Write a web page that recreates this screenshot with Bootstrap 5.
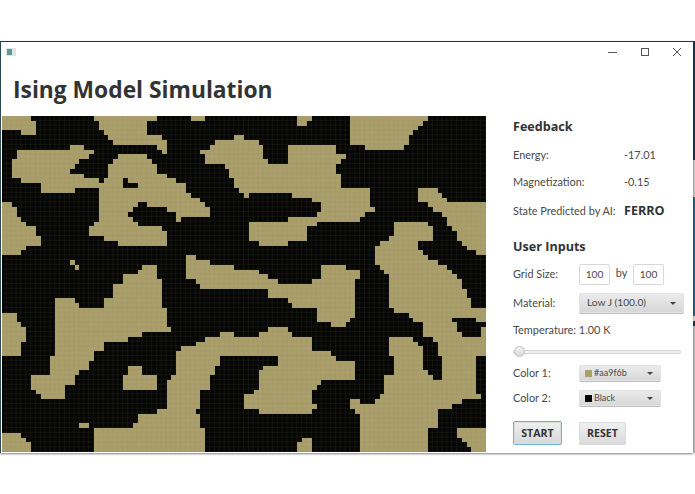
<!DOCTYPE html>
<html lang="en">
<head>
<meta charset="utf-8">
<title>Ising Model Simulation</title>
<link href="https://cdn.jsdelivr.net/npm/bootstrap@5.3.0/dist/css/bootstrap.min.css" rel="stylesheet">
<style>
html,body{height:100%;background:#fff;overflow:hidden}
body{font-family:Lato,Roboto,sans-serif;font-size:10.9px;color:#4a4a4a}
.app-window{width:693px;height:412px;margin:41px 0 0 0;border-top:1px solid #2c3639;border-left:1px solid #2c4a50;background:#fff;box-shadow:0 1px 2px rgba(0,0,0,.5);position:relative}
.desk-strip{position:absolute;left:693px;top:41px;width:2px;height:412px;background:linear-gradient(#22384a 0,#22384a 119px,#c9c9c9 119px,#c9c9c9 156px,#1a6a94 156px,#1a6a94 275px,#dcdcdc 275px,#dcdcdc 280px,#22384a 280px,#22384a 285px,#bdbdbd 285px,#bdbdbd 100%)}
.title-bar{height:20px;padding:0 0 0 5px}
.app-ico{width:10px;height:8px;background:#dfe6e6;display:block}
.app-ico i{display:block;width:5px;height:6px;margin:1px;background:#5a9a92}
.win-btn{width:32px;height:20px;display:flex;align-items:center;justify-content:center}
.main-title{font-family:"Open Sans",sans-serif;font-size:22.8px;font-weight:700;color:#333;margin:0;padding:0 0 0 12px;height:54px;line-height:56px}
.lattice{width:484px;height:336px;display:block;flex:none;margin-left:1px}
.side-panel{padding-left:27px;width:207px;height:336px}
.side-head{font-family:"Open Sans",sans-serif;font-size:12.6px;font-weight:700;color:#333;margin:0;line-height:18px}
.field-row{display:flex;align-items:center}
.lab{width:111px;flex:none;white-space:nowrap}
.lab2{width:66px;flex:none}
.ferro{font-family:"Open Sans",sans-serif;font-size:12.6px;font-weight:700;color:#333}
.num-box{width:31px;height:21px;border:1px solid #d8d8d8;border-radius:2px;text-align:center;line-height:19px;font-size:10.2px;background:#fff}
.by-word{width:23px;text-align:center;margin-top:-3px}
.drop{height:21px;width:105px;border-radius:2px;border-bottom:1px solid #bdbdbd;background:linear-gradient(#ececec,#d6d6d6);font-size:10.2px;padding:0 8px;display:flex;align-items:center;justify-content:space-between;box-shadow:0 0 0 1px #e3e3e3 inset}
.drop.small-drop{height:17px;width:82px;font-size:9px;padding:0 8px 0 6px}
.caret-d{width:0;height:0;border:3px solid transparent;border-top:3px solid #444;border-bottom:0}
.swatch{display:inline-block;width:7px;height:7px;margin-right:2px;vertical-align:-0.5px}
.swatch-a{background:#aa9f6b}
.swatch-b{background:#000}
.range-track{width:168px;height:4px;border:1px solid #d4d4d4;border-radius:2px;background:#f2f2f2;position:relative}
.range-knob{position:absolute;left:0;top:-5px;width:11px;height:11px;border-radius:50%;border:1px solid #c2c2c2;background:linear-gradient(#f2f2f2,#d8d8d8)}
.act{font-family:"Open Sans",sans-serif;font-size:10.6px;font-weight:700;color:#333;border-radius:2px;background:linear-gradient(#f0f0f0,#d8d8d8);text-align:center;box-shadow:0 0 0 1px #dcdcdc inset}
.act-a{width:49px;height:24px;line-height:22px;border:1px solid #6eb4d2}
.act-b{width:47px;height:23px;line-height:23px;margin-left:17px}
.h1s{margin-top:2px}
.r1{margin-top:10px;height:18px}.r2{margin-top:9px;height:18px}.r3{margin-top:11px;height:18px}
.u-head{margin-top:18px}
.r4{margin-top:8px}.r5{margin-top:8px}.r6{margin-top:7px;height:18px}
.r7{margin-top:4px;height:18px}.r8{margin-top:4px}.r9{margin-top:8px}.r10{margin-top:14px}
</style>
</head>
<body>
<div class="desk-strip"></div>
<div class="app-window">
  <div class="title-bar d-flex align-items-center justify-content-between">
    <span class="app-ico"><i></i></span>
    <div class="d-flex">
      <span class="win-btn"><svg width="10" height="10" viewBox="0 0 10 10"><path d="M0 5.5h9" stroke="#555" fill="none"/></svg></span>
      <span class="win-btn"><svg width="10" height="10" viewBox="0 0 10 10"><rect x="1.5" y="1.5" width="7" height="7" stroke="#555" fill="none"/></svg></span>
      <span class="win-btn"><svg width="10" height="10" viewBox="0 0 10 10"><path d="M1 1l8 8M9 1l-8 8" stroke="#555" fill="none"/></svg></span>
    </div>
  </div>
  <h1 class="main-title">Ising Model Simulation</h1>
  <div class="d-flex">
    <svg class="lattice" id="lattice" viewBox="2 116 484 336" aria-label="Ising lattice">
      <defs>
        <pattern id="cells" x="2" y="116" width="4.84" height="4.8" patternUnits="userSpaceOnUse">
          <path d="M4.84 0V4.8M0 4.8H4.84" stroke="#776f49" stroke-width=".5" fill="none" opacity=".4"/>
        </pattern>
      </defs>
      <rect x="2" y="116" width="484" height="336" fill="#060606"/>
      <path id="spins" fill="#aa9f6b" shape-rendering="crispEdges"/>
      <rect x="2" y="116" width="484" height="336" fill="url(#cells)"/>
    </svg>
    <div class="side-panel">
      <h2 class="side-head h1s">Feedback</h2>
      <div class="field-row r1"><span class="lab">Energy:</span><span>-17.01</span></div>
      <div class="field-row r2"><span class="lab">Magnetization:</span><span>-0.15</span></div>
      <div class="field-row r3"><span class="lab">State Predicted by AI:</span><span class="ferro">FERRO</span></div>
      <h2 class="side-head u-head">User Inputs</h2>
      <div class="field-row r4"><span class="lab2">Grid Size:</span><span class="num-box">100</span><span class="by-word">by</span><span class="num-box">100</span></div>
      <div class="field-row r5"><span class="lab2">Material:</span><span class="drop"><span>Low J (100.0)</span><span class="caret-d"></span></span></div>
      <div class="field-row r6"><span>Temperature: 1.00 K</span></div>
      <div class="r7 d-flex align-items-center"><div class="range-track"><span class="range-knob"></span></div></div>
      <div class="field-row r8"><span class="lab2">Color 1:</span><span class="drop small-drop"><span><span class="swatch swatch-a"></span>#aa9f6b</span><span class="caret-d"></span></span></div>
      <div class="field-row r9"><span class="lab2">Color 2:</span><span class="drop small-drop"><span><span class="swatch swatch-b"></span>Black</span><span class="caret-d"></span></span></div>
      <div class="d-flex align-items-center r10"><span class="act act-a">START</span><span class="act act-b">RESET</span></div>
    </div>
  </div>
</div>
<script>
var Q={
a:[[[5,18,92,18,92,28,107,28,107,78,65,78,65,65,20,65,5,58]],
[[282,18,484,18,470,28,440,28,440,70,426,70,440,80,484,80,499,92,499,130,484,130,484,115,470,108,385,100,340,98,325,70,310,68,296,40,282,32]],
[[48,120,208,120,208,108,250,108,265,122,280,128,280,138,265,138,237,160,222,165,222,180,208,180,208,188,250,190,265,205,296,210,296,220,310,220,310,205,338,205,325,195,325,165,340,150,355,140,440,138,470,165,470,188,499,190,515,210,550,220,560,245,585,265,615,280,630,305,630,320,556,320,530,330,525,315,500,295,440,290,440,280,410,280,395,295,385,305,385,320,400,322,415,348,484,350,499,370,499,410,370,410,355,395,325,395,296,378,268,370,268,352,282,350,296,325,296,292,310,292,310,290,296,280,296,238,222,238,222,250,122,250,122,222,65,220,62,200,35,198,35,150,48,148]],
[[368,210,382,210,382,220,412,224,412,240,382,240,368,225]],
[[5,280,35,280,50,292,65,340,107,350,122,390,135,395,107,402,65,418,62,430,5,430]],
[[208,450,222,450,222,460,208,460]],[[222,460,237,460,237,472,222,472]],
[[645,300,660,300,660,310,645,310]],
[[556,440,600,445,630,455,660,465,735,475,735,525,570,525,556,500]],
[[355,525,380,495,410,485,425,470,470,470,470,490,484,510,484,525]],
[[735,78,705,78,705,90,660,92,615,118,600,120,600,135,615,138,618,155,675,165,690,185,705,230,735,260]],
[[730,370,735,370,735,380,730,380]],
[[570,18,615,18,615,28,570,28]]],
b:[[[0,90,40,90,55,120,55,150,70,150,70,168,125,168,125,100,155,100,155,108,272,108,272,128,300,130,300,148,285,150,272,165,272,188,285,190,288,238,375,240,375,290,388,292,388,302,375,305,360,320,345,332,215,338,195,350,185,375,185,398,110,400,110,410,55,410,40,400,25,398,10,385,10,335,90,330,100,340,125,340,125,325,155,325,170,322,215,320,215,308,228,295,228,280,200,275,185,260,140,258,130,250,30,250,0,260]],
[[0,370,10,372,10,380,0,380]],
[[155,18,215,18,200,28,170,45,155,58]],
[[315,18,550,18,550,30,520,50,490,90,475,115,465,130,460,120,375,118,330,105,315,95]],
[[518,240,575,240,595,260,610,280,722,280,722,430,695,430,650,400,620,355,590,310,560,295,530,275,518,265]],
[[445,340,550,342,560,350,560,388,520,392,520,410,550,440,575,460,620,475,650,525,440,525,430,500,390,465,388,405,405,395,445,380]],
[[0,480,40,485,60,495,100,520,200,525,200,505,228,500,228,470,315,472,345,490,345,525,0,525]]],
c:[[[340,20,370,0,485,0,485,80,499,82,499,140,513,142,513,158,400,165,380,178,365,190,340,192,338,182,310,182,310,210,282,212,280,240,265,245,265,270,222,285,222,310,208,312,195,325,192,352,125,352,108,340,92,320,92,292,135,292,150,275,150,225,165,222,165,62,222,62,238,80,310,80,310,62,338,60]],
[[5,100,48,100,48,120,62,125,77,150,77,190,62,195,62,222,5,222]],
[[585,0,735,0,735,20,705,22,660,30,600,20,585,15]],
[[382,252,425,252,425,280,455,282,470,295,470,322,400,322,395,335,368,335,368,295,382,290]],
[[735,172,705,172,700,152,675,152,660,165,615,175,585,190,555,205,530,212,528,290,498,295,498,382,470,385,468,403,412,405,410,432,380,440,282,445,282,515,615,515,615,442,600,440,600,402,585,400,585,385,600,380,600,325,630,322,632,295,645,285,660,235,735,232]],
[[238,432,268,432,268,444,238,444]],[[268,455,282,455,282,465,268,465]],
[[5,455,35,455,62,465,77,488,92,495,92,515,5,515]],
[[730,355,735,355,735,385,730,385]]],
d:[[[0,0,98,0,98,10,200,10,200,0,332,0,332,110,318,112,318,128,300,140,260,140,255,130,215,130,215,92,140,80,140,65,98,52,70,50,70,32,0,32]],
[[432,0,650,0,650,25,665,40,680,85,722,90,722,130,660,112,620,112,620,128,640,130,640,155,660,170,708,170,708,145,722,140,722,222,695,222,695,345,708,345,695,360,650,365,620,378,580,392,575,445,550,445,548,470,548,515,345,515,345,405,330,392,316,375,316,358,288,355,345,358,345,370,390,372,405,352,418,330,418,285,445,280,445,222,432,222,432,172,505,172,505,190,535,195,535,262,560,295,592,302,592,240,575,225,575,180,535,172,530,135,505,125,475,98,432,85]],
[[0,172,65,160,75,145,125,142,130,158,170,170,198,172,200,210,240,212,270,235,332,240,332,300,230,305,200,335,200,360,215,375,215,392,155,402,55,402,30,392,0,382,0,350,10,350,40,330,40,265,85,262,98,250,98,222,40,225,0,232]],
[[155,515,165,480,200,475,200,515]],
[[635,445,665,445,680,435,722,450,722,515,680,515,665,490,650,470,635,462]]]
};
var O={a:[0,110],b:[245,110],c:[0,280],d:[245,280]};
function inPoly(p,x,y){var c=false;for(var i=0,n=p.length,j=n-2;i<n;j=i,i+=2){var yi=p[i+1],yj=p[j+1],xi=p[i],xj=p[j];if((yi>y)!==(yj>y)&&x<(xj-xi)*(y-yi)/(yj-yi)+xi)c=!c;}return c;}
function isTan(px,py){var k=px<245?(py<280?'a':'c'):(py<280?'b':'d');var x=(px-O[k][0])*3,y=(py-O[k][1])*3,c=false;Q[k].forEach(function(s){if(inPoly(s[0],x,y))c=!c;});return c;}
var W=4.84,H=4.8,d='';
for(var r=0;r<70;r++){var start=-1;for(var c=0;c<=100;c++){var t=c<100&&isTan(2+(c+.5)*W,116+(r+.5)*H);if(t&&start<0)start=c;if(!t&&start>=0){d+='M'+(2+start*W).toFixed(2)+' '+(116+r*H).toFixed(2)+'H'+(2+c*W).toFixed(2)+'V'+(116+(r+1)*H).toFixed(2)+'H'+(2+start*W).toFixed(2)+'Z';start=-1;}}}
document.getElementById('spins').setAttribute('d',d);
</script>
<script src="https://cdn.jsdelivr.net/npm/bootstrap@5.3.0/dist/js/bootstrap.bundle.min.js"></script>
</body>
</html>
